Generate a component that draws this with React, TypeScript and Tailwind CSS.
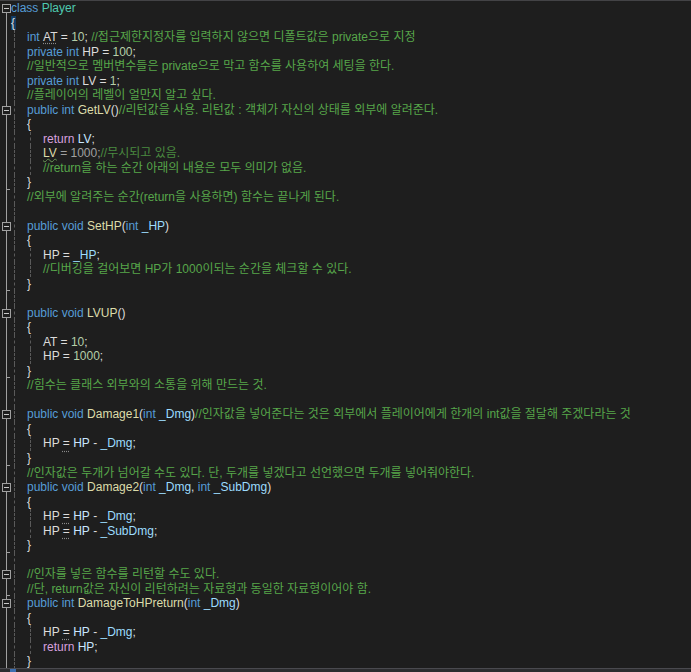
type Tok = [string, string];
type Line = { indent: number; guides: number; gutter: "box" | "line" | "end" | "first"; toks: Tok[] };

const color: Record<string, string> = {
  k: "text-[#569cd6]",
  t: "text-[#4ec9b0]",
  f: "text-[#dcdcaa]",
  n: "text-[#b5cea8]",
  c: "text-[#57a64a]",
  p: "text-[#dcdcdc]",
  r: "text-[#d8a0df]",
  v: "text-[#9cdcfe]",
  w: "text-[#c8e6ff]",
};

const L = (indent: number, guides: number, gutter: Line["gutter"], toks: Tok[]): Line => ({ indent, guides, gutter, toks });

const lines: Line[] = [
  L(0, 0, "first", [["k", "class "], ["t", "Player"]]),
  L(0, 0, "line", [["brace", "{"]]),
  L(1, 1, "line", [["k", "int "], ["dot", "AT"], ["p", " = "], ["n", "10"], ["p", "; "], ["c", "//접근제한지정자를 입력하지 않으면 디폴트값은 private으로 지정"]]),
  L(1, 1, "line", [["k", "private int "], ["p", "HP = "], ["n", "100"], ["p", ";"]]),
  L(1, 1, "line", [["c", "//일반적으로 멤버변수들은 private으로 막고 함수를 사용하여 세팅을 한다."]]),
  L(1, 1, "line", [["k", "private int "], ["p", "LV = "], ["n", "1"], ["p", ";"]]),
  L(1, 1, "line", [["c", "//플레이어의 레벨이 얼만지 알고 싶다."]]),
  L(1, 1, "box", [["k", "public int "], ["f", "GetLV"], ["p", "()"], ["c", "//리턴값을 사용. 리턴값 : 객체가 자신의 상태를 외부에 알려준다."]]),
  L(1, 1, "line", [["p", "{"]]),
  L(2, 2, "line", [["r", "return "], ["w", "LV"], ["p", ";"]]),
  L(2, 2, "line", [["wavy", "LV"], ["dim", " = 1000;"], ["dimc", "//무시되고 있음."]]),
  L(2, 2, "line", [["c", "//return을 하는 순간 아래의 내용은 모두 의미가 없음."]]),
  L(1, 1, "end", [["p", "}"]]),
  L(1, 1, "line", [["c", "//외부에 알려주는 순간(return을 사용하면) 함수는 끝나게 된다."]]),
  L(0, 1, "line", []),
  L(1, 1, "box", [["k", "public void "], ["f", "SetHP"], ["p", "("], ["k", "int "], ["v", "_HP"], ["p", ")"]]),
  L(1, 1, "line", [["p", "{"]]),
  L(2, 2, "line", [["p", "HP = "], ["v", "_HP"], ["p", ";"]]),
  L(2, 2, "line", [["c", "//디버깅을 걸어보면 HP가 1000이되는 순간을 체크할 수 있다."]]),
  L(1, 1, "end", [["p", "}"]]),
  L(0, 1, "line", []),
  L(1, 1, "box", [["k", "public void "], ["f", "LVUP"], ["p", "()"]]),
  L(1, 1, "line", [["p", "{"]]),
  L(2, 2, "line", [["p", "AT = "], ["n", "10"], ["p", ";"]]),
  L(2, 2, "line", [["p", "HP = "], ["n", "1000"], ["p", ";"]]),
  L(1, 1, "end", [["p", "}"]]),
  L(1, 1, "line", [["c", "//힘수는 클래스 외부와의 소통을 위해 만드는 것."]]),
  L(0, 1, "line", []),
  L(1, 1, "box", [["k", "public void "], ["f", "Damage1"], ["p", "("], ["k", "int "], ["v", "_Dmg"], ["p", ")"], ["c", "//인자값을 넣어준다는 것은 외부에서 플레이어에게 한개의 int값을 절달해 주겠다라는 것"]]),
  L(1, 1, "line", [["p", "{"]]),
  L(2, 2, "line", [["p", "HP "], ["eq", "="], ["p", " "], ["w", "HP"], ["p", " - "], ["v", "_Dmg"], ["p", ";"]]),
  L(1, 1, "end", [["p", "}"]]),
  L(1, 1, "line", [["c", "//인자값은 두개가 넘어갈 수도 있다. 단, 두개를 넣겠다고 선언했으면 두개를 넣어줘야한다."]]),
  L(1, 1, "box", [["k", "public void "], ["f", "Damage2"], ["p", "("], ["k", "int "], ["v", "_Dmg"], ["p", ", "], ["k", "int "], ["v", "_SubDmg"], ["p", ")"]]),
  L(1, 1, "line", [["p", "{"]]),
  L(2, 2, "line", [["p", "HP "], ["eq", "="], ["p", " "], ["w", "HP"], ["p", " - "], ["v", "_Dmg"], ["p", ";"]]),
  L(2, 2, "line", [["p", "HP "], ["eq", "="], ["p", " "], ["w", "HP"], ["p", " - "], ["v", "_SubDmg"], ["p", ";"]]),
  L(1, 1, "end", [["p", "}"]]),
  L(0, 1, "line", []),
  L(1, 1, "box", [["c", "//인자를 넣은 함수를 리턴할 수도 있다."]]),
  L(1, 1, "end", [["c", "//단, return값은 자신이 리턴하려는 자료형과 동일한 자료형이어야 함."]]),
  L(1, 1, "box", [["k", "public int "], ["f", "DamageToHPreturn"], ["p", "("], ["k", "int "], ["v", "_Dmg"], ["p", ")"]]),
  L(1, 1, "line", [["p", "{"]]),
  L(2, 2, "line", [["p", "HP "], ["eq", "="], ["p", " "], ["w", "HP"], ["p", " - "], ["v", "_Dmg"], ["p", ";"]]),
  L(2, 2, "line", [["r", "return "], ["w", "HP"], ["p", ";"]]),
  L(1, 1, "end", [["p", "}"]]),
];

const Token = ({ tok }: { tok: Tok }) => {
  const [kind, text] = tok;
  if (kind === "brace")
    return <span className="inline-block h-full bg-[#123c66] pr-[1px] text-[#dcdcdc]">{text}</span>;
  if (kind === "dot")
    return <span className="text-[#dcdcdc] underline decoration-dotted decoration-[#8a8a8a] underline-offset-2">{text}</span>;
  if (kind === "wavy")
    return <span className="text-[#dcdcaa] underline decoration-wavy decoration-[#6a9955] decoration-1 underline-offset-1">{text}</span>;
  if (kind === "eq")
    return <span className="text-[#dcdcdc] underline decoration-dotted decoration-[#8a8a8a] underline-offset-[3px]">{text}</span>;
  if (kind === "dim") return <span className="text-[#a0a0a0]">{text}</span>;
  if (kind === "dimc") return <span className="text-[#4a8a40]">{text}</span>;
  return <span className={color[kind]}>{text}</span>;
};

const Gutter = ({ kind }: { kind: Line["gutter"] }) => (
  <div className="relative w-[11px] shrink-0">
    <div className={`absolute left-[6px] bottom-0 w-px bg-[#a0a0a0] ${kind === "first" ? "top-[6px]" : "top-0"}`} />
    {kind === "end" && <div className="absolute left-[6px] bottom-0 h-px w-[4px] bg-[#a0a0a0]" />}
    {(kind === "box" || kind === "first") && (
      <div className="absolute left-[2px] top-[3px] flex h-[9px] w-[9px] items-center justify-center border border-[#a0a0a0] bg-[#1e1e1e]">
        <div className="h-px w-[5px] bg-[#c8c8c8]" />
      </div>
    )}
  </div>
);

export default function App() {
  return (
    <div className="flex h-screen flex-col overflow-hidden border-t border-[#434346] bg-[#1e1e1e] font-['Liberation_Sans','Noto_Sans_CJK_KR',sans-serif] text-[12px]">
      <div className="flex-1 overflow-hidden">
        {lines.map((ln, i) => {
          const cols = Math.max(ln.indent, ln.guides);
          return (
            <div key={i} className="flex h-[14.53px] items-stretch leading-[14.53px] whitespace-pre">
              <Gutter kind={ln.gutter} />
              {Array.from({ length: cols }).map((_, c) => (
                <div key={c} className="w-[16px] shrink-0">
                  {c < ln.guides && <div className="ml-[3px] h-full border-l border-dashed border-[#5a5a5a]" />}
                </div>
              ))}
              <div className="flex items-stretch">
                {ln.toks.map((t, j) => (
                  <Token key={j} tok={t} />
                ))}
              </div>
            </div>
          );
        })}
      </div>
      <div className="flex h-[4px] shrink-0 border-t border-[#4a4a4f] bg-[#2d2d30]">
        <div className="ml-[10px] h-full w-[6px] bg-[#3d6fb0]" />
      </div>
    </div>
  );
}
